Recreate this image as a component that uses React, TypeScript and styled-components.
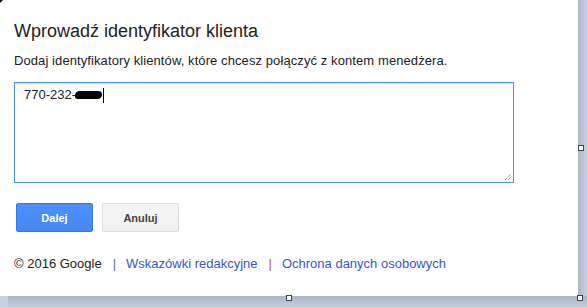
import React, { FC } from "react";
import styled, { createGlobalStyle } from "styled-components";

const GlobalStyle = createGlobalStyle`
  html, body {
    margin: 0;
    padding: 0;
    background: #c9d3e2;
  }
  body {
    font-family: Arial, "Liberation Sans", sans-serif;
  }
`;

const App: FC = () => {
  return (
    <Screen>
      <GlobalStyle />
      <Corner />
      <Panel>
        <Title>Wprowadź identyfikator klienta</Title>
        <Lead>
          Dodaj identyfikatory klientów, które chcesz połączyć z kontem
          menedżera.
        </Lead>
        <Field>
          <Entry>
            770-232-
            <Blot />
            <Caret />
          </Entry>
          <Grip viewBox="0 0 8 8">
            <path d="M1 7 L7 1 M4 7 L7 4" stroke="#666" strokeWidth="1" strokeDasharray="1 1" />
          </Grip>
        </Field>
        <ButtonRow>
          <Button $primary>Dalej</Button>
          <Button>Anuluj</Button>
        </ButtonRow>
        <Footer>
          <span>© 2016 Google</span>
          <Sep>|</Sep>
          <FooterLink href="#">Wskazówki redakcyjne</FooterLink>
          <Sep $warm>|</Sep>
          <FooterLink href="#">Ochrona danych osobowych</FooterLink>
        </Footer>
      </Panel>
      <RightEdge />
      <BottomEdge>
        <BottomLead />
        <BottomRest />
      </BottomEdge>
      <Handle style={{ left: 578, top: 145 }} />
      <Handle style={{ left: 286, top: 295 }} />
      <Handle style={{ left: 577, top: 295 }} />
    </Screen>
  );
};

export default App;

const Screen = styled.div`
  position: relative;
  width: 587px;
  height: 307px;
  display: grid;
  grid-template-columns: 578px 9px;
  grid-template-rows: 296px 11px;
  overflow: hidden;
`;

const Corner = styled.div`
  position: absolute;
  left: 0;
  top: 0;
  width: 0;
  height: 0;
  border-top: 3px solid #111;
  border-right: 3px solid transparent;
  z-index: 2;
`;

const Panel = styled.div`
  background: #fff;
  padding: 19px 0 0 14px;
  box-sizing: border-box;
  color: #222;
`;

const Title = styled.h1`
  margin: 0;
  font-size: 18px;
  font-weight: normal;
  line-height: 24px;
  color: #222;
`;

const Lead = styled.p`
  margin: 9px 0 0;
  font-size: 13px;
  line-height: 18px;
  letter-spacing: 0.09px;
  color: #222;
`;

const Field = styled.div`
  position: relative;
  margin-top: 12px;
  width: 500px;
  height: 101px;
  box-sizing: border-box;
  border: 1px solid #4d90fe;
  box-shadow: inset 0 2px 1px -1px #ddd;
  padding: 4px 9px;
`;

const Entry = styled.div`
  display: flex;
  align-items: center;
  font-size: 13px;
  line-height: 16px;
  color: #222;
`;

const Blot = styled.span`
  display: inline-block;
  width: 27px;
  height: 8px;
  margin-left: -1px;
  background: #000;
  border-radius: 5px 4px 5px 3px;
`;

const Caret = styled.span`
  display: inline-block;
  width: 1px;
  height: 15px;
  margin-left: 1px;
  background: #000;
`;

const Grip = styled.svg`
  position: absolute;
  right: 1px;
  bottom: 1px;
  width: 8px;
  height: 8px;
`;

const ButtonRow = styled.div`
  display: flex;
  gap: 9px;
  margin: 20px 0 0 2px;
`;

const Button = styled.button<{ $primary?: boolean }>`
  width: 77px;
  height: 29px;
  box-sizing: border-box;
  border-radius: 2px;
  border: 1px solid ${(p) => (p.$primary ? "#3079ed" : "#dcdcdc")};
  background: ${(p) =>
    p.$primary
      ? "linear-gradient(#4d90fe, #4787ed)"
      : "linear-gradient(#f5f5f5, #f1f1f1)"};
  color: ${(p) => (p.$primary ? "#fff" : "#444")};
  font-family: Arial, "Liberation Sans", sans-serif;
  font-size: 11px;
  font-weight: bold;
  padding: 0;
  cursor: pointer;
`;

const Footer = styled.div`
  display: flex;
  align-items: baseline;
  margin-top: 23px;
  font-size: 13px;
  line-height: 18px;
  color: #222;
`;

const Sep = styled.span<{ $warm?: boolean }>`
  margin: 0 10px 0 11px;
  color: ${(p) => (p.$warm ? "#b0603f" : "#5a6a9a")};
`;

const FooterLink = styled.a`
  color: #3a56c4;
  text-decoration: none;
`;

const RightEdge = styled.div`
  background: linear-gradient(90deg, #a9b6cb, #c6d0df);
`;

const BottomEdge = styled.div`
  grid-column: 1 / 3;
  display: flex;
`;

const BottomLead = styled.div`
  width: 8px;
  background: #c6d1e1;
`;

const BottomRest = styled.div`
  flex: 1;
  background: linear-gradient(#a8b4c9, #c3cddc);
`;

const Handle = styled.div`
  position: absolute;
  width: 6px;
  height: 6px;
  box-sizing: border-box;
  border: 1px solid #444;
  background: #fff;
  z-index: 3;
`;
